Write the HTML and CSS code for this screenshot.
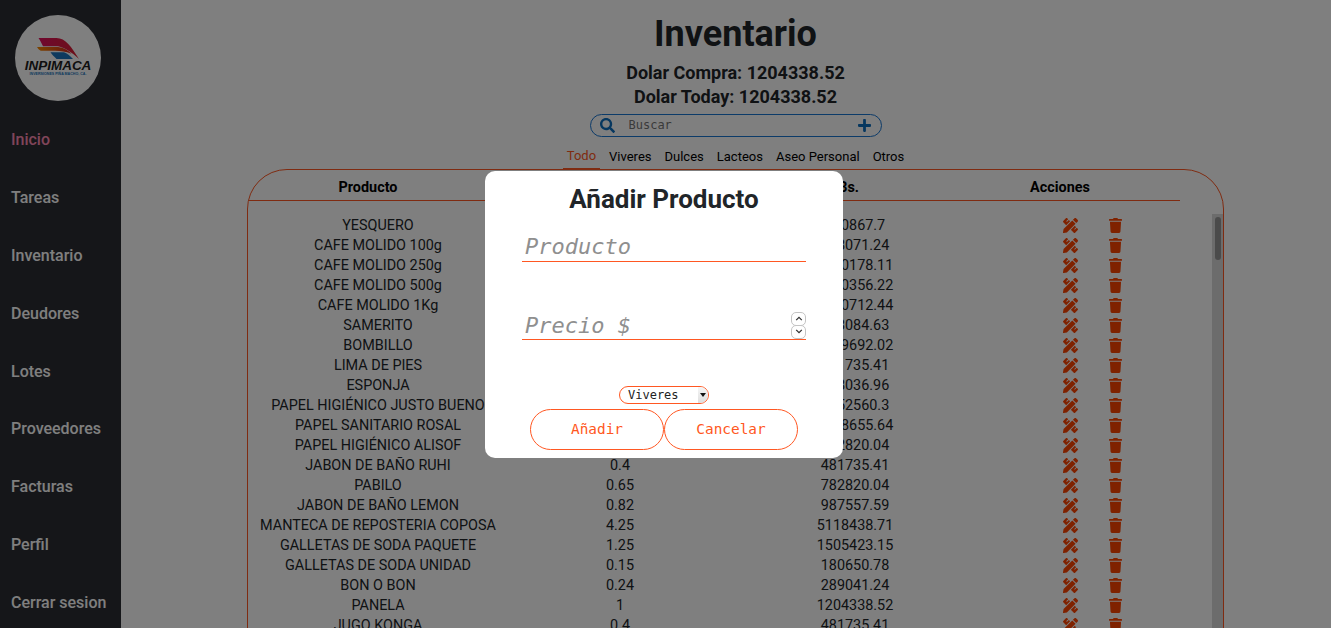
FILE: index.html
```html
<!DOCTYPE html>
<html lang="es">
<head>
    <meta charset="UTF-8">
    <title>Inventario</title>
    <link rel="stylesheet" href="styles.css">
</head>
<body>
    <svg class="icon-defs" width="0" height="0">
        <symbol id="i-tools" viewBox="0 0 512 512"><path d="M109.46 244.04l134.58-134.56-44.12-44.12-61.68 61.68a7.919 7.919 0 0 1-11.21 0l-11.21-11.21c-3.1-3.1-3.1-8.12 0-11.21l61.68-61.68-33.64-33.65C131.47-3.1 111.39-3.1 99 9.29L9.29 99c-12.38 12.39-12.39 32.47 0 44.86l100.17 100.18zm388.47-116.8c18.76-18.76 18.75-49.17 0-67.93l-45.25-45.25c-18.76-18.76-49.18-18.76-67.95 0l-46.02 46.01 113.2 113.2 46.02-46.03zM316.08 82.71l-297 296.96L.32 487.11c-2.53 14.49 10.09 27.11 24.59 24.56l107.45-18.84L429.28 195.9 316.08 82.71zm186.63 285.43l-33.64-33.64-61.68 61.68c-3.1 3.1-8.12 3.1-11.21 0l-11.21-11.21c-3.09-3.1-3.09-8.12 0-11.21l61.68-61.68-44.14-44.14L267.93 402.5l100.21 100.2c12.39 12.39 32.47 12.39 44.86 0l89.71-89.7c12.39-12.39 12.39-32.47 0-44.86z"/></symbol>
        <symbol id="i-trash" viewBox="0 0 448 512"><path d="M432 32H312l-9.4-18.7A24 24 0 0 0 281.1 0H166.8a23.72 23.72 0 0 0-21.4 13.3L136 32H16A16 16 0 0 0 0 48v32a16 16 0 0 0 16 16h416a16 16 0 0 0 16-16V48a16 16 0 0 0-16-16zM53.2 467a48 48 0 0 0 47.9 45h245.8a48 48 0 0 0 47.9-45L416 128H32z"/></symbol>
    </svg>

    <aside class="sidebar">
        <div class="logo">
            <svg class="logo-wings" viewBox="0 0 56 28">
                <defs>
                    <linearGradient id="wing-top"><stop offset="0" stop-color="#e0105f"/><stop offset="1" stop-color="#d8202f"/></linearGradient>
                    <linearGradient id="wing-mid"><stop offset="0" stop-color="#f58a00"/><stop offset="1" stop-color="#d4261f"/></linearGradient>
                </defs>
                <path fill="url(#wing-top)" d="M2 0H26C38 0 46 12 56 28 46 19 38 13 28 11H8C6 7 4 3 2 0Z"/>
                <path fill="url(#wing-mid)" d="M0 12H28C36 13 41 16 46 21 38 18 32 17 24 17H5C3 16 1 14 0 12Z"/>
                <path fill="#1c75bc" d="M18 19H36C40 20 44 24 48 28H26C23 25 20 22 18 19Z"/>
            </svg>
            <span class="logo-name">INPIMACA</span>
            <span class="logo-sub">INVERSIONES PIÑA MACHO, CA.</span>
        </div>
        <nav class="nav">
            <a class="nav-link active">Inicio</a>
            <a class="nav-link">Tareas</a>
            <a class="nav-link">Inventario</a>
            <a class="nav-link">Deudores</a>
            <a class="nav-link">Lotes</a>
            <a class="nav-link">Proveedores</a>
            <a class="nav-link">Facturas</a>
            <a class="nav-link">Perfil</a>
            <a class="nav-link">Cerrar sesion</a>
        </nav>
    </aside>

    <main class="content">
        <h1 class="title">Inventario</h1>
        <p class="rate">Dolar Compra: 1204338.52</p>
        <p class="rate">Dolar Today: 1204338.52</p>

        <div class="search">
            <svg class="search-icon" viewBox="0 0 512 512"><path d="M505 442.7L405.3 343c-4.5-4.5-10.6-7-17-7H372c27.6-35.3 44-79.7 44-128C416 93.1 322.9 0 208 0S0 93.1 0 208s93.1 208 208 208c48.3 0 92.7-16.4 128-44v16.3c0 6.4 2.5 12.5 7 17l99.7 99.7c9.4 9.4 24.6 9.4 33.9 0l28.3-28.3c9.4-9.4 9.4-24.6.1-34zM208 336c-70.7 0-128-57.2-128-128 0-70.7 57.2-128 128-128 70.7 0 128 57.2 128 128 0 70.7-57.2 128-128 128z"/></svg>
            <input class="search-input" type="text" placeholder="Buscar">
            <svg class="search-add" viewBox="0 0 448 512"><path d="M416 208H272V64c0-17.67-14.33-32-32-32h-32c-17.67 0-32 14.33-32 32v144H32c-17.67 0-32 14.33-32 32v32c0 17.67 14.33 32 32 32h144v144c0 17.67 14.33 32 32 32h32c17.67 0 32-14.33 32-32V304h144c17.67 0 32-14.33 32-32v-32c0-17.67-14.33-32-32-32z"/></svg>
        </div>

        <div class="tabs">
            <a class="tab active">Todo</a>
            <a class="tab">Viveres</a>
            <a class="tab">Dulces</a>
            <a class="tab">Lacteos</a>
            <a class="tab">Aseo Personal</a>
            <a class="tab">Otros</a>
        </div>

        <section class="panel">
            <div class="panel-head">
                <span class="head-name">Producto</span>
                <span class="head-usd">Precio $</span>
                <span class="head-bs">Precio Bs.</span>
                <span class="head-actions">Acciones</span>
            </div>
            <div class="panel-body">
                <div class="rows">
                    <div class="row"><span class="col-name">YESQUERO</span><span class="col-usd">0.2</span><span class="col-bs">240867.7</span><span class="col-actions"><svg class="i-edit"><use href="#i-tools"/></svg><svg class="i-del"><use href="#i-trash"/></svg></span></div>
                    <div class="row"><span class="col-name">CAFE MOLIDO 100g</span><span class="col-usd">0.64</span><span class="col-bs">768071.24</span><span class="col-actions"><svg class="i-edit"><use href="#i-tools"/></svg><svg class="i-del"><use href="#i-trash"/></svg></span></div>
                    <div class="row"><span class="col-name">CAFE MOLIDO 250g</span><span class="col-usd">1.5</span><span class="col-bs">1860178.11</span><span class="col-actions"><svg class="i-edit"><use href="#i-tools"/></svg><svg class="i-del"><use href="#i-trash"/></svg></span></div>
                    <div class="row"><span class="col-name">CAFE MOLIDO 500g</span><span class="col-usd">3</span><span class="col-bs">3720356.22</span><span class="col-actions"><svg class="i-edit"><use href="#i-tools"/></svg><svg class="i-del"><use href="#i-trash"/></svg></span></div>
                    <div class="row"><span class="col-name">CAFE MOLIDO 1Kg</span><span class="col-usd">6</span><span class="col-bs">7440712.44</span><span class="col-actions"><svg class="i-edit"><use href="#i-tools"/></svg><svg class="i-del"><use href="#i-trash"/></svg></span></div>
                    <div class="row"><span class="col-name">SAMERITO</span><span class="col-usd">0.8</span><span class="col-bs">963084.63</span><span class="col-actions"><svg class="i-edit"><use href="#i-tools"/></svg><svg class="i-del"><use href="#i-trash"/></svg></span></div>
                    <div class="row"><span class="col-name">BOMBILLO</span><span class="col-usd">1.3</span><span class="col-bs">1569692.02</span><span class="col-actions"><svg class="i-edit"><use href="#i-tools"/></svg><svg class="i-del"><use href="#i-trash"/></svg></span></div>
                    <div class="row"><span class="col-name">LIMA DE PIES</span><span class="col-usd">0.4</span><span class="col-bs">481735.41</span><span class="col-actions"><svg class="i-edit"><use href="#i-tools"/></svg><svg class="i-del"><use href="#i-trash"/></svg></span></div>
                    <div class="row"><span class="col-name">ESPONJA</span><span class="col-usd">0.7</span><span class="col-bs">848036.96</span><span class="col-actions"><svg class="i-edit"><use href="#i-tools"/></svg><svg class="i-del"><use href="#i-trash"/></svg></span></div>
                    <div class="row"><span class="col-name">PAPEL HIGIÉNICO JUSTO BUENO</span><span class="col-usd">1.3</span><span class="col-bs">1552560.3</span><span class="col-actions"><svg class="i-edit"><use href="#i-tools"/></svg><svg class="i-del"><use href="#i-trash"/></svg></span></div>
                    <div class="row"><span class="col-name">PAPEL SANITARIO ROSAL</span><span class="col-usd">1.1</span><span class="col-bs">1328655.64</span><span class="col-actions"><svg class="i-edit"><use href="#i-tools"/></svg><svg class="i-del"><use href="#i-trash"/></svg></span></div>
                    <div class="row"><span class="col-name">PAPEL HIGIÉNICO ALISOF</span><span class="col-usd">0.65</span><span class="col-bs">782820.04</span><span class="col-actions"><svg class="i-edit"><use href="#i-tools"/></svg><svg class="i-del"><use href="#i-trash"/></svg></span></div>
                    <div class="row"><span class="col-name">JABON DE BAÑO RUHI</span><span class="col-usd">0.4</span><span class="col-bs">481735.41</span><span class="col-actions"><svg class="i-edit"><use href="#i-tools"/></svg><svg class="i-del"><use href="#i-trash"/></svg></span></div>
                    <div class="row"><span class="col-name">PABILO</span><span class="col-usd">0.65</span><span class="col-bs">782820.04</span><span class="col-actions"><svg class="i-edit"><use href="#i-tools"/></svg><svg class="i-del"><use href="#i-trash"/></svg></span></div>
                    <div class="row"><span class="col-name">JABON DE BAÑO LEMON</span><span class="col-usd">0.82</span><span class="col-bs">987557.59</span><span class="col-actions"><svg class="i-edit"><use href="#i-tools"/></svg><svg class="i-del"><use href="#i-trash"/></svg></span></div>
                    <div class="row"><span class="col-name">MANTECA DE REPOSTERIA COPOSA</span><span class="col-usd">4.25</span><span class="col-bs">5118438.71</span><span class="col-actions"><svg class="i-edit"><use href="#i-tools"/></svg><svg class="i-del"><use href="#i-trash"/></svg></span></div>
                    <div class="row"><span class="col-name">GALLETAS DE SODA PAQUETE</span><span class="col-usd">1.25</span><span class="col-bs">1505423.15</span><span class="col-actions"><svg class="i-edit"><use href="#i-tools"/></svg><svg class="i-del"><use href="#i-trash"/></svg></span></div>
                    <div class="row"><span class="col-name">GALLETAS DE SODA UNIDAD</span><span class="col-usd">0.15</span><span class="col-bs">180650.78</span><span class="col-actions"><svg class="i-edit"><use href="#i-tools"/></svg><svg class="i-del"><use href="#i-trash"/></svg></span></div>
                    <div class="row"><span class="col-name">BON O BON</span><span class="col-usd">0.24</span><span class="col-bs">289041.24</span><span class="col-actions"><svg class="i-edit"><use href="#i-tools"/></svg><svg class="i-del"><use href="#i-trash"/></svg></span></div>
                    <div class="row"><span class="col-name">PANELA</span><span class="col-usd">1</span><span class="col-bs">1204338.52</span><span class="col-actions"><svg class="i-edit"><use href="#i-tools"/></svg><svg class="i-del"><use href="#i-trash"/></svg></span></div>
                    <div class="row"><span class="col-name">JUGO KONGA</span><span class="col-usd">0.4</span><span class="col-bs">481735.41</span><span class="col-actions"><svg class="i-edit"><use href="#i-tools"/></svg><svg class="i-del"><use href="#i-trash"/></svg></span></div>
                </div>
                <div class="scrollbar"><div class="scroll-thumb"></div></div>
            </div>
        </section>
    </main>

    <div class="overlay">
        <form class="modal">
            <h2 class="modal-title">Añadir Producto</h2>
            <input class="field" type="text" placeholder="Producto">
            <div class="field-wrap">
                <input class="field" type="text" placeholder="Precio $">
                <span class="spin">
                    <span class="spin-btn"><svg viewBox="0 0 10 6"><path d="M1.5 5L5 1.5 8.5 5"/></svg></span>
                    <span class="spin-btn"><svg viewBox="0 0 10 6"><path d="M1.5 1L5 4.5 8.5 1"/></svg></span>
                </span>
            </div>
            <div class="select">
                <span class="select-value">Viveres</span>
                <span class="select-arrow"></span>
            </div>
            <div class="modal-actions">
                <button class="btn" type="button">Añadir</button>
                <button class="btn" type="button">Cancelar</button>
            </div>
        </form>
    </div>
</body>
</html>
```

FILE: styles.css
```css
* {
    box-sizing: border-box;
}

html, body {
    height: 100%;
}

body {
    margin: 0;
    display: flex;
    height: 628px;
    overflow: hidden;
    font-family: Roboto, sans-serif;
    background: white;
    color: #212529;
}

.icon-defs {
    position: absolute;
}

/* sidebar */
.sidebar {
    width: 121px;
    flex-shrink: 0;
    background: #2b2d33;
    padding: 15px 0 0 0;
}

.logo {
    width: 86px;
    height: 86px;
    margin-left: 15px;
    border-radius: 50%;
    background: white;
    display: flex;
    flex-direction: column;
    align-items: center;
    padding-top: 23px;
}

.logo-wings {
    width: 42px;
    height: 21px;
    margin-left: -1px;
}

.logo-name {
    font-family: "Liberation Sans", sans-serif;
    font-size: 13.5px;
    line-height: 13px;
    font-weight: bold;
    font-style: italic;
    color: #1d1d20;
}

.logo-sub {
    font-family: "Liberation Sans", sans-serif;
    font-size: 3.6px;
    line-height: 5px;
    font-weight: bold;
    color: #1c75bc;
    white-space: nowrap;
}

.nav {
    display: flex;
    flex-direction: column;
    margin-top: 10px;
}

.nav-link {
    height: 57.9px;
    line-height: 58px;
    padding-left: 11px;
    font-size: 16px;
    font-weight: 500;
    color: #fff;
    white-space: nowrap;
}

.nav-link.active {
    color: #ff8ab4;
}

/* main column */
.content {
    flex: 1;
    min-width: 0;
    display: flex;
    flex-direction: column;
    align-items: center;
    padding: 14px 0 0 19px;
}

.title {
    margin: 0;
    font-size: 36px;
    line-height: 40px;
    font-weight: 700;
    color: #212529;
    flex-shrink: 0;
}

.rate {
    margin: 0;
    font-size: 18px;
    line-height: 24px;
    font-weight: 700;
    flex-shrink: 0;
}

.title + .rate {
    margin-top: 7px;
}

.search {
    width: 292px;
    height: 23px;
    flex-shrink: 0;
    margin-top: 5px;
    border: 1.5px solid #1976d2;
    border-radius: 12px;
    display: flex;
    align-items: center;
    padding: 0 10px 0 9px;
}

.search-icon {
    width: 15px;
    height: 15px;
    fill: #0d6ebf;
    flex-shrink: 0;
}

.search-add {
    width: 13px;
    height: 15px;
    fill: #0d6ebf;
    flex-shrink: 0;
}

.search-input {
    flex: 1;
    min-width: 0;
    border: none;
    outline: none;
    background: transparent;
    padding: 0 0 1px 14px;
    font-family: "DejaVu Sans Mono", monospace;
    font-size: 12px;
}

.search-input::placeholder {
    color: #757575;
}

.tabs {
    display: flex;
    gap: 6px;
    height: 33px;
    flex-shrink: 0;
}

.tab {
    padding: 12px 3.5px 0 3.5px;
    font-size: 13px;
    line-height: 16px;
    color: black;
}

.tab.active {
    padding-top: 11px;
    height: 32px;
    color: #ff5722;
    border-bottom: 1px solid #ff5722;
}

/* product table */
.panel {
    width: 977px;
    height: 520px;
    flex-shrink: 0;
    margin-top: -1px;
    border: 1px solid #ff5722;
    border-radius: 40px;
    overflow: hidden;
}

.panel-head {
    display: flex;
    height: 31px;
    width: 932px;
    padding-top: 5px;
    align-items: center;
    border-bottom: 1px solid #ff5722;
    font-size: 14.4px;
    font-weight: 700;
    color: black;
    text-align: center;
}

.head-name {
    width: 240px;
}

.head-usd {
    width: 230px;
}

.head-bs {
    width: 216px;
}

.head-actions {
    width: 240px;
    margin-left: 6px;
}

.panel-body {
    display: flex;
    height: 488px;
    margin-top: 13px;
    font-size: 14.4px;
    color: #212529;
}

.rows {
    flex: 1;
    min-width: 0;
    padding-top: 2px;
}

.scrollbar {
    width: 11px;
    flex-shrink: 0;
    padding: 3px 2px 0 3px;
    background: #d8d8d8;
}

.scroll-thumb {
    height: 43px;
    border-radius: 3px;
    background: #969696;
}

.row {
    display: flex;
    height: 20px;
    line-height: 20px;
    align-items: center;
}

.col-name {
    width: 260px;
    text-align: center;
    white-space: nowrap;
}

.col-usd {
    width: 224px;
    text-align: center;
}

.col-bs {
    width: 246px;
    text-align: center;
}

.col-actions {
    flex: 1;
    display: flex;
    align-items: center;
    margin-bottom: 2px;
}

.i-edit {
    width: 15px;
    height: 15px;
    margin-left: 85px;
    fill: #ff4500;
}

.i-del {
    width: 13px;
    height: 15px;
    margin-left: 31px;
    fill: #ff4500;
}

/* add product dialog */
.overlay {
    position: fixed;
    inset: 0;
    background: rgba(0, 0, 0, 0.5);
    display: flex;
    align-items: center;
    justify-content: center;
    padding-right: 3px;
}

.modal {
    width: 358px;
    height: 287px;
    background: white;
    border-radius: 10px;
    display: flex;
    flex-direction: column;
    align-items: center;
    padding-top: 12px;
}

.modal-title {
    margin: 0;
    font-size: 26px;
    line-height: 32px;
    font-weight: 700;
    color: #212529;
}

.field-wrap {
    position: relative;
    margin-top: 46px;
}

.field {
    display: block;
    width: 284px;
    height: 32px;
    margin-top: 15px;
    padding: 2px 3px 0 3px;
    border: none;
    border-bottom: 1px solid #ff5722;
    outline: none;
    background: transparent;
    font-family: "DejaVu Sans Mono", monospace;
    font-size: 22px;
}

.field-wrap .field {
    margin-top: 0;
    padding-top: 4px;
}

.field::placeholder {
    color: #8f8f8f;
    font-style: italic;
}

.spin {
    position: absolute;
    top: 4px;
    right: 0;
    display: flex;
    flex-direction: column;
}

.spin-btn {
    width: 15px;
    height: 14px;
    margin-bottom: -1px;
    border: 1px solid #c4c4c4;
    border-radius: 5px;
    background: white;
    display: flex;
    align-items: center;
    justify-content: center;
}

.spin-btn svg {
    width: 8px;
    height: 5px;
    fill: none;
    stroke: #333;
    stroke-width: 1.6;
}

.select {
    width: 90px;
    height: 18px;
    margin-top: 46px;
    border: 1px solid #ff5722;
    border-radius: 9px;
    display: flex;
    align-items: center;
    overflow: hidden;
    font-family: "DejaVu Sans Mono", monospace;
    font-size: 12px;
    color: #222;
}

.select-value {
    flex: 1;
    padding-left: 8px;
}

.select-arrow {
    width: 10px;
    height: 100%;
    background: linear-gradient(#f6f6f6, #dedede);
    display: flex;
    align-items: center;
    justify-content: center;
}

.select-arrow::after {
    content: "";
    border-left: 3.5px solid transparent;
    border-right: 3.5px solid transparent;
    border-top: 4px solid #111;
}

.modal-actions {
    display: flex;
    margin-top: 5px;
}

.btn {
    width: 134px;
    height: 41px;
    border: 1px solid #ff5722;
    border-radius: 21px;
    background: white;
    color: #ff5722;
    font-family: "DejaVu Sans Mono", monospace;
    font-size: 14.4px;
}
```
